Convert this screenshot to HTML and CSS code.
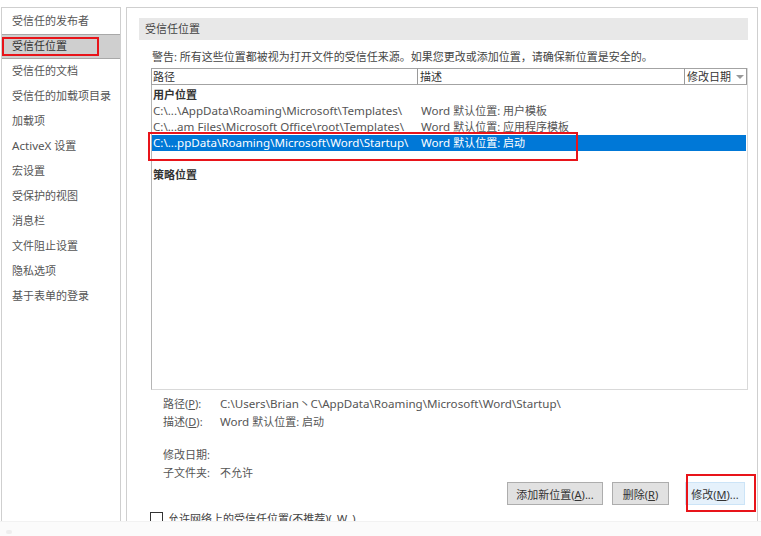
FILE: index.html
```html
<!DOCTYPE html>
<html>
<head>
<meta charset="utf-8">
<link rel="stylesheet" href="styles.css">
</head>
<body>
<div class="screen">
  <div class="main">
    <nav class="nav">
      <div class="nav-item">受信任的发布者</div>
      <div class="nav-item selected">受信任位置<span class="mark mark-nav"></span></div>
      <div class="nav-item">受信任的文档</div>
      <div class="nav-item">受信任的加载项目录</div>
      <div class="nav-item">加载项</div>
      <div class="nav-item"><span class="lat">ActiveX</span> 设置</div>
      <div class="nav-item">宏设置</div>
      <div class="nav-item">受保护的视图</div>
      <div class="nav-item">消息栏</div>
      <div class="nav-item">文件阻止设置</div>
      <div class="nav-item">隐私选项</div>
      <div class="nav-item">基于表单的登录</div>
    </nav>
    <section class="panel">
      <div class="band">受信任位置</div>
      <div class="body">
        <div class="warning">警告: 所有这些位置都被视为打开文件的受信任来源。如果您更改或添加位置，请确保新位置是安全的。</div>
        <div class="list">
          <div class="list-head">
            <div class="col c1">路径</div>
            <div class="col c2">描述</div>
            <div class="col c3">修改日期 <span class="arrow"></span></div>
          </div>
          <div class="group first">用户位置</div>
          <div class="row"><span class="c1 lat">C:\...\AppData\Roaming\Microsoft\Templates\</span><span class="c2"><span class="lat">Word</span> 默认位置: 用户模板</span></div>
          <div class="row"><span class="c1 lat">C:\...am Files\Microsoft Office\root\Templates\</span><span class="c2"><span class="lat">Word</span> 默认位置: 应用程序模板</span></div>
          <div class="row sel"><span class="c1 lat">C:\...ppData\Roaming\Microsoft\Word\Startup\</span><span class="c2"><span class="lat">Word</span> 默认位置: 启动</span><span class="mark mark-row"></span></div>
          <div class="row"></div>
          <div class="group">策略位置</div>
        </div>
        <div class="details">
          <div class="drow"><span class="dl">路径(<u>P</u>):</span><span class="lat">C:\Users\Brian丶C\AppData\Roaming\Microsoft\Word\Startup\</span></div>
          <div class="drow"><span class="dl">描述(<u>D</u>):</span><span><span class="lat">Word</span> 默认位置: 启动</span></div>
          <div class="drow gap"></div>
          <div class="drow"><span class="dl">修改日期:</span><span></span></div>
          <div class="drow"><span class="dl">子文件夹:</span><span>不允许</span></div>
        </div>
        <div class="buttons">
          <button class="btn b-add">添加新位置(<u>A</u>)...</button>
          <button class="btn b-del">删除(<u>R</u>)</button>
          <button class="btn b-mod">修改(<u>M</u>)...<span class="mark mark-btn"></span></button>
        </div>
        <label class="check"><span class="box"></span>允许网络上的受信任位置(不推荐)(<u>W</u>)</label>
      </div>
    </section>
  </div>
  <div class="fade"><span class="blip"></span></div>
</div>
</body>
</html>
```
FILE: styles.css
```css
* { box-sizing: border-box; }
html, body { margin: 0; padding: 0; background: #fff; }
body {
  font-family: "Noto Sans", "Noto Sans CJK SC", sans-serif;
  font-size: 11px;
  color: #444;
  width: 761px;
  height: 536px;
  overflow: hidden;
}
.lat { font-size: 11.6px; }
.screen { display: flex; flex-direction: column; height: 536px; }
.main {
  height: 521px;
  display: flex;
  padding: 7px 0 0 1px;
  gap: 5px;
  overflow: hidden;
}
.nav {
  width: 120px;
  border: 1px solid #cfcfcf;
  border-bottom: none;
  flex: none;
  padding-top: 1px;
}
.nav-item {
  position: relative;
  height: 25px;
  line-height: 24px;
  padding-left: 10px;
  color: #555;
  white-space: nowrap;
}
.nav-item.selected {
  background: #cfcfcf;
  border-top: 1px solid #a8a8a8;
  border-bottom: 1px solid #a8a8a8;
  line-height: 22px;
  color: #333;
}
.mark { position: absolute; border: 2px solid #e8141a; pointer-events: none; }
.mark-nav { left: 0; top: 2px; width: 97px; height: 19px; }
.panel {
  width: 632px;
  border: 1px solid #cfcfcf;
  border-bottom: none;
  flex: none;
  padding: 10px 9px 0 12px;
}
.band {
  height: 22px;
  background: #e8e8e8;
  line-height: 22px;
  padding-left: 6px;
  color: #444;
}
.body { padding-left: 12px; }
.warning { margin-top: 9px; height: 16px; line-height: 16px; padding-left: 1px; color: #444; }
.list {
  margin-top: 3px;
  height: 322px;
  border: 1px solid #d9d9d9;
  border-left-color: #b5b5b5;
  border-top: none;
  position: relative;
}
.list-head { display: flex; height: 17px; }
.col {
  height: 17px;
  line-height: 15px;
  border: 1px solid #a3a3a3;
  border-right-color: #9a9a9a;
  background: #fff;
  padding-left: 1px;
  color: #333;
  white-space: nowrap;
}
.list-head .c1 { width: 267px; margin-left: -1px; }
.list-head .c2 { width: 267px; border-left: none; padding-left: 2px; }
.list-head .c3 { width: 62px; border-left: none; display: flex; align-items: center; gap: 3px; padding-left: 2px; }
.arrow {
  width: 0; height: 0;
  border-left: 4px solid transparent;
  border-right: 4px solid transparent;
  border-top: 4px solid #999;
  margin-left: 2px;
}
.group { height: 16px; line-height: 16px; padding-left: 1px; color: #333; font-weight: bold; }
.group.first { height: 18px; padding-top: 2px; }
.row { position: relative; display: flex; height: 16px; line-height: 16px; color: #555; white-space: nowrap; }
.row .c1 { width: 267px; padding-left: 1px; overflow: hidden; }
.row .c2 { padding-left: 2px; }
.row.sel { background: #0078d7; color: #fff; margin-right: 1px; }
.mark-row { left: -4px; top: -3px; width: 430px; height: 29px; }
.details { padding: 6px 0 0 12px; }
.drow { display: flex; height: 18px; line-height: 16px; color: #555; white-space: nowrap; }
.drow.gap { height: 15px; }
.dl { width: 57px; flex: none; }
.buttons {
  display: flex;
  justify-content: flex-end;
  margin-top: -1px;
  padding-right: 3px;
}
.btn {
  position: relative;
  font: inherit;
  color: #333;
  height: 23px;
  padding: 0;
  background: #e1e1e1;
  border: 1px solid #adadad;
  border-radius: 0;
}
.b-add { width: 96px; }
.b-del { width: 57px; margin-left: 9px; }
.b-mod { width: 60px; margin-left: 16px; background: #e5f1fb; border-color: #cce4f7; }
.mark-btn { left: 0; top: -9px; width: 70px; height: 38px; }
.check {
  display: flex;
  align-items: center;
  gap: 5px;
  margin: 5px 0 0 -1px;
  color: #444;
}
.box { width: 13px; height: 13px; border: 1px solid #333; background: #fff; }
.fade {
  height: 15px;
  background: #fbfbfb;
  border-top: 1px solid #f2f2f2;
  position: relative;
}
.blip { position: absolute; left: 6px; top: 8px; width: 6px; height: 4px; background: #eee; border-radius: 2px; }
```
